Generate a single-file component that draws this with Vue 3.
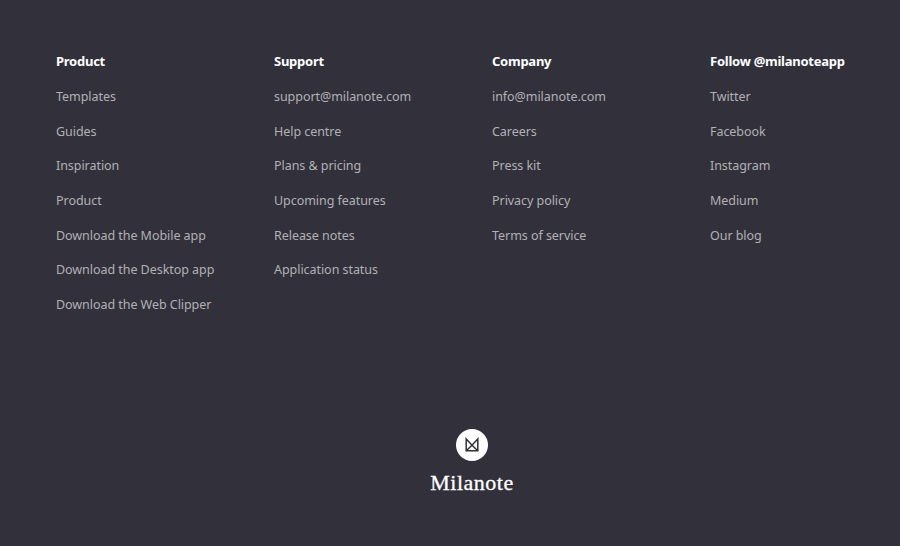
<script setup>
const columns = [
  {
    title: "Product",
    links: ["Templates", "Guides", "Inspiration", "Product", "Download the Mobile app", "Download the Desktop app", "Download the Web Clipper"],
  },
  {
    title: "Support",
    links: ["support@milanote.com", "Help centre", "Plans & pricing", "Upcoming features", "Release notes", "Application status"],
  },
  {
    title: "Company",
    links: ["info@milanote.com", "Careers", "Press kit", "Privacy policy", "Terms of service"],
  },
  {
    title: "Follow @milanoteapp",
    links: ["Twitter", "Facebook", "Instagram", "Medium", "Our blog"],
  },
];
</script>

<template>
  <footer class="footer">
    <div class="columns">
      <div v-for="col in columns" :key="col.title" class="column">
        <h4 class="title">{{ col.title }}</h4>
        <a v-for="link in col.links" :key="link" class="link" href="#">{{ link }}</a>
      </div>
    </div>
    <div class="brand">
      <div class="badge">
        <svg width="16" height="16" viewBox="0 0 16 16" fill="none" stroke="#32313b" stroke-width="1.5">
          <path d="M2.2 2V13.8H13.8V2L8 8.2L2.2 2Z" />
          <path d="M2.2 13.8L8 8.2L13.8 13.8" />
        </svg>
      </div>
      <div class="wordmark">Milanote</div>
    </div>
  </footer>
</template>

<style>
html,
body {
  margin: 0;
  background: #32313b;
}
</style>

<style scoped>
.footer {
  box-sizing: border-box;
  width: 900px;
  height: 546px;
  padding: 52px 12px 0 56px;
  background: #32313b;
  font-family: "Noto Sans", sans-serif;
  overflow: hidden;
}
.columns {
  display: grid;
  grid-template-columns: repeat(4, 218px);
  height: 377px;
}
.column {
  display: flex;
  flex-direction: column;
}
.title {
  margin: 0 0 1px;
  font-size: 13px;
  line-height: 18.3px;
  letter-spacing: -0.25px;
  font-weight: 700;
  color: #ffffff;
  white-space: nowrap;
}
.link {
  margin-top: 16.67px;
  font-size: 12.5px;
  line-height: 18px;
  letter-spacing: -0.05px;
  color: #b1b0b5;
  text-decoration: none;
  white-space: nowrap;
}
.brand {
  display: flex;
  flex-direction: column;
  align-items: center;
}
.badge {
  width: 32px;
  height: 32px;
  border-radius: 50%;
  background: #ffffff;
  display: flex;
  align-items: center;
  justify-content: center;
}
.wordmark {
  margin-top: 9px;
  font-family: "Liberation Serif", serif;
  font-size: 22px;
  line-height: 26px;
  letter-spacing: 0.5px;
  -webkit-text-stroke: 0.3px #ffffff;
  color: #ffffff;
}
</style>
